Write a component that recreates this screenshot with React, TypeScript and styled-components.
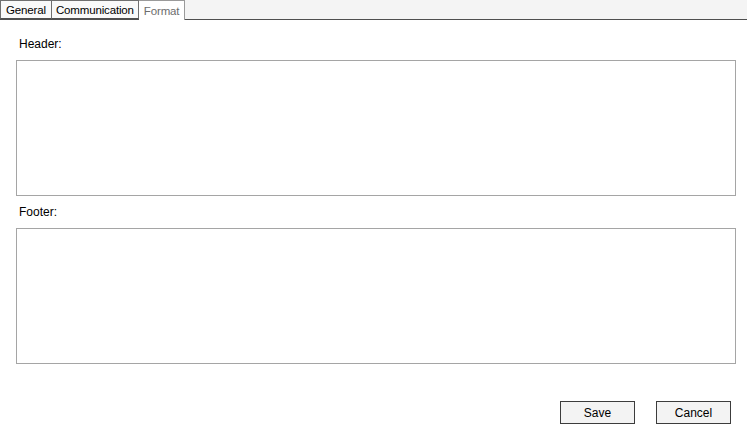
import React from "react";
import styled, { createGlobalStyle } from "styled-components";

const Global = createGlobalStyle`
  html, body { margin: 0; padding: 0; background: #ffffff; }
  body { font-family: "Liberation Sans", Arial, sans-serif; font-size: 12px; color: #000; }
  * { box-sizing: border-box; }
`;

const Page = styled.div`
  width: 747px;
  height: 437px;
  display: flex;
  flex-direction: column;
  background: #fff;
`;

const TabStrip = styled.div`
  height: 20px;
  display: flex;
  align-items: flex-end;
  background: #f4f4f4;
  border-bottom: 1px solid #4f4f4f;
`;

const Tab = styled.div<{ $active?: boolean; $first?: boolean; $pad?: number }>`
  height: ${(p) => (p.$active ? "20px" : "19px")};
  margin-bottom: ${(p) => (p.$active ? "-1px" : "0")};
  padding: 0 ${(p) => p.$pad ?? 5}px;
  display: flex;
  align-items: center;
  background: ${(p) => (p.$active ? "#ffffff" : "#f9f9f9")};
  border: 1px solid ${(p) => (p.$active ? "#9a9a9a" : "#6f6f6f")};
  border-bottom: ${(p) => (p.$active ? "none" : "1px solid #4f4f4f")};
  border-left: ${(p) => (p.$first ? "1px solid #6f6f6f" : "none")};
  color: ${(p) => (p.$active ? "#6d6d6d" : "#000")};
  font-size: 11.5px;
  letter-spacing: -0.15px;
  white-space: nowrap;
`;

const Body = styled.div`
  flex: 1;
  display: flex;
  flex-direction: column;
  padding: 17px 11px 0 16px;
`;

const Label = styled.div`
  padding-left: 3px;
  height: 23px;
  line-height: 14px;
  font-size: 12px;
  color: #000;
`;

const TextArea = styled.textarea`
  display: block;
  width: 720px;
  height: 136px;
  border: 1px solid #a5a5a5;
  background: #fff;
  resize: none;
  outline: none;
  margin: 0 0 9px 0;
  font-family: inherit;
`;

const Footer = styled.div`
  display: flex;
  justify-content: flex-end;
  gap: 21px;
  padding: 28px 5px 0 0;
`;

const Button = styled.button`
  width: 75px;
  height: 23px;
  border: 1px solid #3c3c3c;
  background: #f3f3f3;
  font-family: "Liberation Sans", Arial, sans-serif;
  font-size: 12px;
  color: #000;
  padding: 0;
`;

export default function App() {
  return (
    <>
      <Global />
      <Page>
        <TabStrip>
          <Tab $first>General</Tab>
          <Tab $pad={4}>Communication</Tab>
          <Tab $active>Format</Tab>
        </TabStrip>
        <Body>
          <Label>Header:</Label>
          <TextArea />
          <Label>Footer:</Label>
          <TextArea />
          <Footer>
            <Button>Save</Button>
            <Button>Cancel</Button>
          </Footer>
        </Body>
      </Page>
    </>
  );
}
